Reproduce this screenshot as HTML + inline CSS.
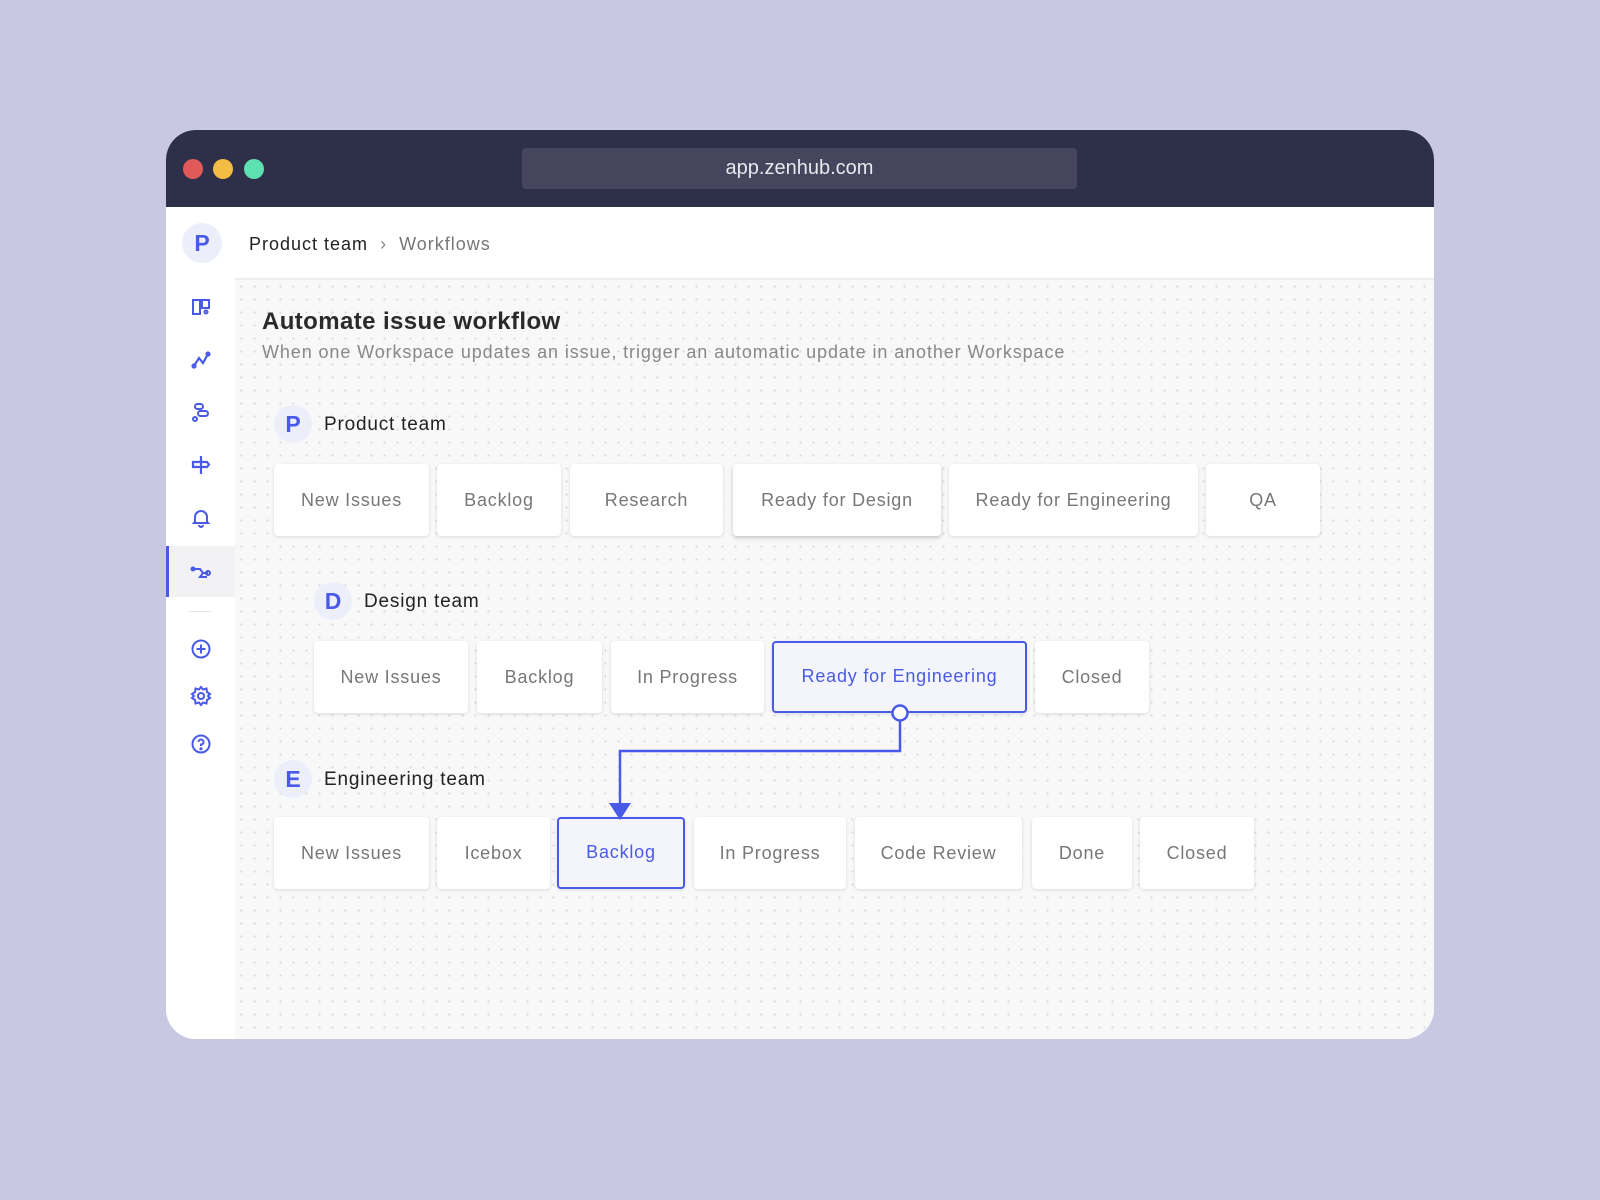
<!DOCTYPE html>
<html><head><style>
*{margin:0;padding:0;box-sizing:border-box}
body{width:1600px;height:1200px;background:#c9c8e3;font-family:"Liberation Sans",sans-serif;position:relative;overflow:hidden}
.win{position:absolute;left:166px;top:130px;width:1268px;height:909px;border-radius:30px;overflow:hidden;background:#fff}
.tb{position:absolute;left:0;top:0;width:100%;height:77px;background:#2e2f48}
.dot{position:absolute;top:29px;width:20px;height:20px;border-radius:50%}
.url{position:absolute;left:356px;top:18px;width:555px;height:41px;background:#45465d;border-radius:4px;color:#e8e8ee;font-size:20px;text-align:center;line-height:41px}
.side{position:absolute;left:0;top:77px;width:69px;bottom:0;background:#fff}
.main{position:absolute;left:69px;top:150px;right:0;bottom:0;background-color:#f8f8f8;background-image:radial-gradient(#d9d9dd 1px,transparent 1.2px);background-size:13px 13px}
.hdr{position:absolute;left:69px;top:77px;right:0;height:73px;background:#fff;border-bottom:2px solid #eeeef0}
.av{position:absolute;width:38px;height:38px;border-radius:50%;background:#eceefa;color:#4a5ae8;font-weight:bold;font-size:23px;text-align:center;line-height:38px}
.lbl{position:absolute;font-size:19px;color:#222;letter-spacing:0.8px}
.card{position:absolute;height:72px;background:#fff;border-radius:4px;box-shadow:0 1px 3px rgba(0,0,0,.12);color:#777;font-size:18px;text-align:center;line-height:72px;letter-spacing:0.8px;white-space:nowrap}
.sel{background:#f4f5fb;border:2.5px solid #4a5ae8;color:#4a5ae8;line-height:67px}
.ic{position:absolute;left:24px;width:22px;height:22px}
</style></head><body>
<div class="win">
<div class="tb">
<div class="dot" style="left:17px;background:#e05a5a"></div>
<div class="dot" style="left:47px;background:#f2bd42"></div>
<div class="dot" style="left:78px;background:#5de1b1"></div>
<div class="url">app.zenhub.com</div>
</div>
<div class="side">
<div class="av" style="left:16px;top:16px;width:40px;height:40px;line-height:40px">P</div>
<svg class="ic" style="top:89px" viewBox="0 0 22 22" fill="none" stroke="#4a5ae8" stroke-width="2"><rect x="3" y="4" width="7" height="14"/><rect x="12" y="4" width="7" height="8"/><circle cx="16" cy="16" r="1.5"/></svg>
<svg class="ic" style="top:142px" viewBox="0 0 22 22" fill="none" stroke="#4a5ae8" stroke-width="2.2"><path d="M4 17L9 9L13 14L18 5"/><circle cx="4" cy="17" r="1.5"/><circle cx="18" cy="5" r="1.5"/></svg>
<svg class="ic" style="top:194px" viewBox="0 0 22 22" fill="none" stroke="#4a5ae8" stroke-width="2"><rect x="5" y="3" width="8" height="5" rx="2.5"/><rect x="8" y="10" width="10" height="5" rx="2.5"/><circle cx="5" cy="18" r="2"/></svg>
<svg class="ic" style="top:247px" viewBox="0 0 22 22" fill="none" stroke="#4a5ae8" stroke-width="2.2"><path d="M11 2V20M3 8H17L19 10.5L17 13H3Z"/></svg>
<svg class="ic" style="top:300px" viewBox="0 0 22 22" fill="none" stroke="#4a5ae8" stroke-width="2"><path d="M5 15V10A6 6 0 0 1 17 10V15L18 16H4Z"/><path d="M9 18A2 2 0 0 0 13 18"/></svg>
<div style="position:absolute;left:0;top:339px;width:69px;height:51px;background:#f2f2f4;border-left:3px solid #4a5ae8"></div>
<svg class="ic" style="top:354px" viewBox="0 0 22 22" fill="none" stroke="#4a5ae8" stroke-width="2"><circle cx="3" cy="8" r="1.5" fill="#4a5ae8"/><path d="M5 8H10L13 12H18M13 12L10 16H17"/><circle cx="18" cy="12" r="2"/></svg>
<div style="position:absolute;left:22px;top:404px;width:24px;height:1px;background:#e6e6ea"></div>
<svg class="ic" style="top:431px" viewBox="0 0 22 22" fill="none" stroke="#4a5ae8" stroke-width="2"><circle cx="11" cy="11" r="8.5"/><path d="M11 6.5V15.5M6.5 11H15.5"/></svg>
<svg class="ic" style="top:478px" viewBox="0 0 22 22" fill="none" stroke="#4a5ae8" stroke-width="2"><circle cx="11" cy="11" r="3"/><path d="M11 2L13 4.5L16.5 3.5L17 7L20 9L18 11L20 13L17 15L16.5 18.5L13 17.5L11 20L9 17.5L5.5 18.5L5 15L2 13L4 11L2 9L5 7L5.5 3.5L9 4.5Z"/></svg>
<svg class="ic" style="top:526px" viewBox="0 0 22 22" fill="none" stroke="#4a5ae8" stroke-width="2"><circle cx="11" cy="11" r="8.5"/><path d="M8.5 9A2.5 2.5 0 1 1 11 11.5V13"/><circle cx="11" cy="15.8" r=".6" fill="#4a5ae8"/></svg>
</div>
<div class="hdr"><div style="position:absolute;left:14px;top:27px;font-size:18px;color:#222;letter-spacing:1px">Product team <span style="color:#888;margin:0 6px">›</span> <span style="color:#777">Workflows</span></div></div>
<div class="main"></div>
<div style="position:absolute;left:96px;top:178px;font-size:24px;font-weight:bold;color:#2a2a2a;letter-spacing:0.4px">Automate issue workflow</div>
<div style="position:absolute;left:96px;top:212px;font-size:18px;color:#888;letter-spacing:0.9px">When one Workspace updates an issue, trigger an automatic update in another Workspace</div>

<div class="av" style="left:108px;top:275px">P</div><div class="lbl" style="left:158px;top:284px">Product team</div>
<div class="card" style="left:108px;top:334px;width:155px">New Issues</div>
<div class="card" style="left:271px;top:334px;width:124px">Backlog</div>
<div class="card" style="left:404px;top:334px;width:153px">Research</div>
<div class="card" style="left:567px;top:334px;width:208px;box-shadow:0 2px 4px rgba(0,0,0,.2)">Ready for Design</div>
<div class="card" style="left:783px;top:334px;width:249px">Ready for Engineering</div>
<div class="card" style="left:1040px;top:334px;width:114px">QA</div>

<div class="av" style="left:148px;top:452px">D</div><div class="lbl" style="left:198px;top:461px">Design team</div>
<div class="card" style="left:148px;top:511px;width:154px">New Issues</div>
<div class="card" style="left:311px;top:511px;width:125px">Backlog</div>
<div class="card" style="left:445px;top:511px;width:153px">In Progress</div>
<div class="card sel" style="left:606px;top:511px;width:255px">Ready for Engineering</div>
<div class="card" style="left:869px;top:511px;width:114px">Closed</div>

<div class="av" style="left:108px;top:630px">E</div><div class="lbl" style="left:158px;top:639px">Engineering team</div>
<div class="card" style="left:108px;top:687px;width:155px">New Issues</div>
<div class="card" style="left:271px;top:687px;width:113px">Icebox</div>
<div class="card sel" style="left:391px;top:687px;width:128px">Backlog</div>
<div class="card" style="left:528px;top:687px;width:152px">In Progress</div>
<div class="card" style="left:689px;top:687px;width:167px">Code Review</div>
<div class="card" style="left:866px;top:687px;width:100px">Done</div>
<div class="card" style="left:974px;top:687px;width:114px">Closed</div>

<svg style="position:absolute;left:0;top:0" width="1268" height="909"><path d="M734 583V621H454V676" fill="none" stroke="#4a5ae8" stroke-width="2.5"/><path d="M443 673H465L454 690Z" fill="#4a5ae8"/><circle cx="734" cy="583" r="7.5" fill="#fff" stroke="#4a5ae8" stroke-width="2.5"/></svg>
</div>
</body></html>
